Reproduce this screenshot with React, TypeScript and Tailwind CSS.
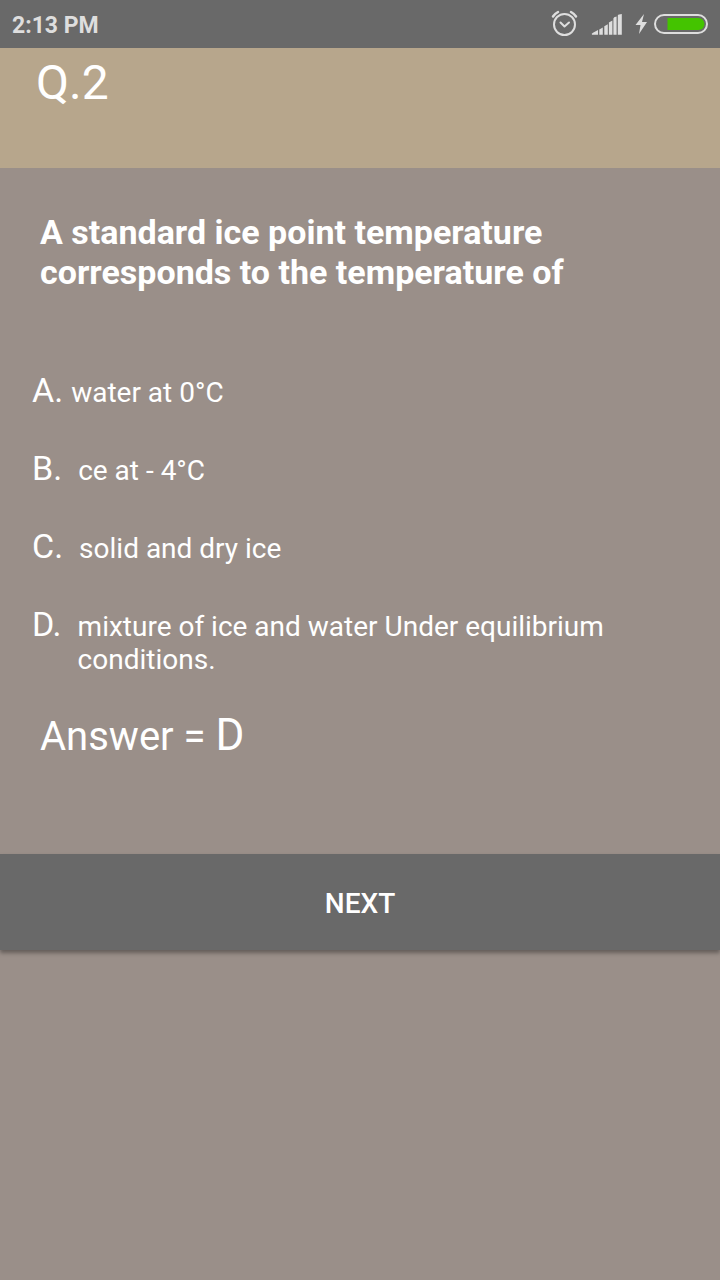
const options = [
  { letter: "A.", text: "water at 0°C", gap: "pl-2" },
  { letter: "B.", text: "ce at - 4°C", gap: "pl-4" },
  { letter: "C.", text: "solid and dry ice", gap: "pl-4" },
  { letter: "D.", text: "mixture of ice and water Under equilibrium conditions.", gap: "pl-4" },
];

function StatusIcons() {
  return (
    <svg className="h-12 w-[180px]" viewBox="540 0 180 48" fill="none" aria-hidden="true">
      <g stroke="#dedede" strokeWidth="2" strokeLinecap="round" strokeLinejoin="round">
        <circle cx="564.5" cy="24.5" r="10.5" />
        <path d="M560.500 22.500l4 4 4.500-4" />
        <path d="M553 16.500q2-3 5-4.500M576 16.500q-2-3-5-4.500" strokeWidth="2.500" />
      </g>
      <path
        fill="#dedede"
        d="M592 34.700q-1-1 1-2l5-2.700v4.700zM599.300 29.500l3.500-2v7.200h-3.500zM604.300 26.200l3.500-2v10.500h-3.500zM608.900 22.500l3.500-2v14.200h-3.500zM613.400 18.500q0-1.500 3.200-2v18.200h-3.200zM617.800 15.500q.5-1.500 4-1.500v20.700h-4z"
      />
      <path fill="#dedede" d="M644 14l-8.500 11h5l-1.500 9 8-12h-5z" />
      <rect x="655" y="15" width="52" height="18" rx="9" stroke="#dedede" strokeWidth="2" />
      <path fill="#44c400" d="M667.500 18h31a6 6 0 0 1 0 12h-31z" />
    </svg>
  );
}

export default function App() {
  return (
    <div className="min-h-screen bg-[#9a8f89] font-[Roboto,sans-serif] text-white">
      <div className="flex h-12 items-center justify-between bg-[#696969] pl-3">
        <span className="pt-[3px] text-[23px] leading-7 font-bold text-[#dedede]">2:13 PM</span>
        <StatusIcons />
      </div>
      <header className="h-[120px] bg-[#b7a68c] px-9 pt-[5px]">
        <h1 className="text-5xl leading-[60px]">Q.2</h1>
      </header>
      <main>
        <h2 className="px-10 pt-11 text-[34px] leading-10 font-bold">
          A standard ice point temperature corresponds to the temperature of
        </h2>
        <ol className="flex flex-col gap-[38px] px-8 pt-[78px]">
          {options.map((o) => (
            <li key={o.letter} className="flex items-baseline">
              <span className="text-[34px] leading-10">{o.letter}</span>
              <span className={"text-[28px] leading-[33px] " + o.gap}>{o.text}</span>
            </li>
          ))}
        </ol>
        <p className="px-10 pt-[29px] text-[40px] leading-[60px]">
          Answer = <span className="text-[44px]">D</span>
        </p>
        <button className="mt-[87px] block h-24 w-full bg-[#696969] pt-1 text-[28px] font-medium shadow-[0_3px_4px_rgba(0,0,0,0.35)]">
          NEXT
        </button>
      </main>
    </div>
  );
}
